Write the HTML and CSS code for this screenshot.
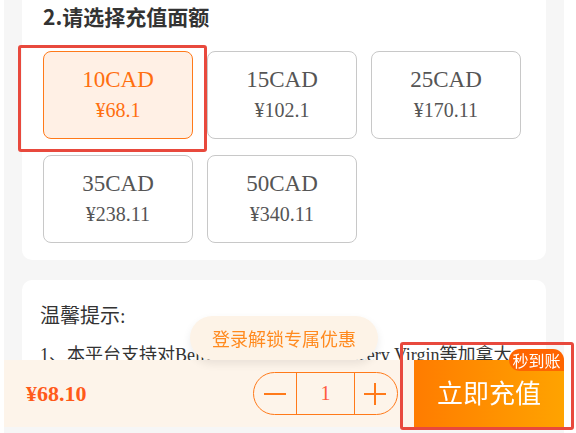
FILE: index.html
```html
<!DOCTYPE html>
<html lang="zh-CN">
<head>
  <meta charset="UTF-8" />
  <meta name="viewport" content="width=device-width, initial-scale=1.0"/>
  <title>充值</title>
  <link rel="stylesheet" href="styles.css">
</head>
<body>
  <div class="page">
    <section class="card amount">
      <h2>2.请选择充值面额</h2>
      <div class="options">
        <div class="option active">
          <span class="name">10CAD</span>
          <span class="price">¥68.1</span>
        </div>
        <div class="option">
          <span class="name">15CAD</span>
          <span class="price">¥102.1</span>
        </div>
        <div class="option">
          <span class="name">25CAD</span>
          <span class="price">¥170.11</span>
        </div>
        <div class="option">
          <span class="name">35CAD</span>
          <span class="price">¥238.11</span>
        </div>
        <div class="option">
          <span class="name">50CAD</span>
          <span class="price">¥340.11</span>
        </div>
      </div>
    </section>

    <section class="card tips">
      <h3>温馨提示:</h3>
      <p>1、本平台支持对Bell、Fido、Telus、Grocery Virgin等加拿大</p>
    </section>
  </div>

  <div class="login-tip">登录解锁专属优惠</div>

  <div class="bottom-bar">
    <span class="total">¥68.10</span>
    <div class="stepper">
      <span class="step minus"><i></i></span>
      <span class="count">1</span>
      <span class="step plus"><i></i><b></b></span>
    </div>
    <button class="pay">
      立即充值
      <span class="badge">秒到账</span>
    </button>
  </div>

  <div class="mark mark-option"></div>
  <div class="mark mark-pay"></div>
</body>
</html>
```

FILE: styles.css
```css
:root {
  --orange: #ff6f0f;
  --orange-light: #fff0e5;
  --cream: #fdf4ea;
  --mark: #e8493d;
  --text: #333;
  --gray-text: #555;
}
body {
  margin: 0;
  background: #fff;
  font-family: "Liberation Serif", "Noto Sans CJK SC", serif;
  color: var(--text);
  overflow: hidden;
  height: 433px;
}
.page {
  width: 524px;
  margin-left: 4px;
  padding: 0 18px;
  background: #f6f6f6;
  height: 433px;
  overflow: hidden;
}
.card {
  background: #fff;
  border-radius: 10px;
}
.amount {
  padding: 0 25px 17px 21px;
  border-radius: 0 0 10px 10px;
}
.amount h2 {
  margin: 0;
  font-size: 21px;
  line-height: 33px;
  font-weight: bold;
  font-family: "Noto Sans CJK SC", sans-serif;
  color: var(--text);
}
.options {
  margin-top: 18px;
  display: grid;
  grid-template-columns: repeat(3, 150px);
  column-gap: 14px;
  row-gap: 16px;
}
.option {
  box-sizing: border-box;
  height: 88px;
  border: 1px solid #c8c8c8;
  border-radius: 8px;
  display: flex;
  flex-direction: column;
  align-items: center;
  padding-top: 13px;
  color: var(--gray-text);
}
.option .name {
  font-size: 23px;
  line-height: 30px;
}
.option .price {
  font-size: 20px;
  line-height: 30px;
}
.option.active {
  background: var(--orange-light);
  border-color: #ff7a1a;
  color: var(--orange);
}
.tips {
  margin-top: 20px;
  padding: 22px 18px;
  height: 100px;
}
.tips h3 {
  margin: 0;
  font-size: 20px;
  line-height: 28px;
  font-weight: normal;
}
.tips p {
  margin: 11px 0 0;
  font-size: 18px;
  line-height: 28px;
  white-space: nowrap;
}
.login-tip {
  position: fixed;
  left: 190px;
  top: 316px;
  height: 44px;
  width: 188px;
  box-sizing: border-box;
  border-radius: 22px;
  background: #fdf3e7;
  color: #ff8a1f;
  font-family: "Noto Sans CJK SC", sans-serif;
  font-size: 18px;
  line-height: 44px;
  text-align: center;
  box-shadow: 0 4px 8px rgba(0, 0, 0, 0.08);
  z-index: 5;
}
.bottom-bar {
  position: fixed;
  left: 4px;
  top: 360px;
  width: 560px;
  height: 67px;
  background: var(--cream);
  display: flex;
  align-items: center;
  z-index: 4;
}
.total {
  margin-left: 22px;
  font-size: 22px;
  font-weight: bold;
  color: #ff5a1a;
}
.stepper {
  margin-left: auto;
  box-sizing: border-box;
  width: 145px;
  height: 43px;
  border: 1px solid #ff7a1a;
  border-radius: 22px;
  display: flex;
}
.step {
  width: 43px;
  position: relative;
}
.step i, .step b {
  position: absolute;
  background: #ff7a1a;
}
.step i {
  left: 10px;
  top: 20px;
  width: 22px;
  height: 2px;
}
.step.plus i {
  left: 9px;
}
.step b {
  left: 19px;
  top: 10px;
  width: 2px;
  height: 22px;
}
.count {
  box-sizing: border-box;
  width: 59px;
  border-left: 1px solid #ff7a1a;
  border-right: 1px solid #ff7a1a;
  text-align: center;
  line-height: 41px;
  font-size: 20px;
  color: #ff5a3c;
}
.pay {
  position: relative;
  margin-left: 16px;
  width: 150px;
  height: 67px;
  border: none;
  padding: 0 0 4px;
  background: linear-gradient(90deg, #ff7c00, #ffa300);
  color: #fff;
  font-family: "Noto Sans CJK SC", sans-serif;
  font-size: 26px;
}
.badge {
  position: absolute;
  right: 0;
  top: -11px;
  width: 55px;
  height: 22px;
  line-height: 22px;
  border-radius: 11px 11px 0 11px;
  background: #ff6500;
  font-size: 16px;
  color: #fff;
}
.mark {
  position: fixed;
  border: 3px solid var(--mark);
  border-radius: 3px;
  box-sizing: border-box;
  z-index: 10;
}
.mark-option {
  left: 18px;
  top: 45px;
  width: 189px;
  height: 107px;
}
.mark-pay {
  left: 400px;
  top: 342px;
  width: 174px;
  height: 88px;
}
```
